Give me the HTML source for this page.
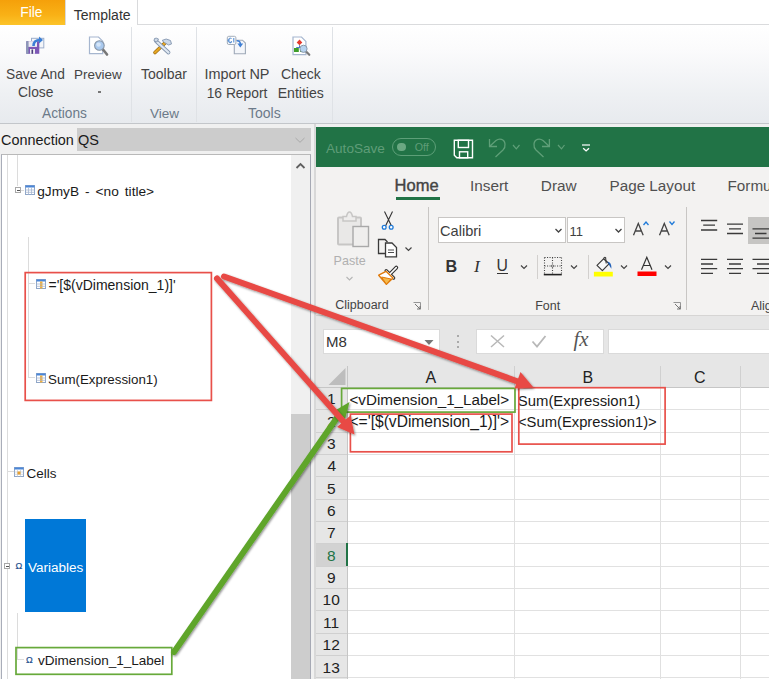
<!DOCTYPE html>
<html><head><meta charset="utf-8">
<style>
*{margin:0;padding:0;box-sizing:border-box}
html,body{width:769px;height:679px;overflow:hidden;background:#fff;font-family:"Liberation Sans",sans-serif;position:relative}
.a{position:absolute}
.t{position:absolute;white-space:nowrap;line-height:1}
svg{position:absolute;overflow:visible}
</style></head><body>
<!-- ===== Top app ribbon ===== -->
<div class="a" style="left:0;top:0;width:769px;height:25px;background:#fff"></div>
<div class="a" style="left:0;top:24px;width:769px;height:1px;background:#dadbdd"></div>
<div class="a" style="left:0;top:0;width:65px;height:25px;background:linear-gradient(#f5a00a,#f9b116 60%,#fcc42a)"></div>
<div class="a" style="left:65px;top:0;width:73px;height:25px;background:#fff;border-left:1px solid #d9dadc;border-right:1px solid #d9dadc"></div>
<div class="a" style="left:0;top:25px;width:769px;height:99px;background:linear-gradient(#ffffff,#fbfbfc 25%,#eef0f3 70%,#e7eaee)"></div>
<div class="a" style="left:0;top:123px;width:769px;height:1px;background:#c3c6ca"></div>
<div class="a" style="left:131px;top:27px;width:1px;height:95px;background:#dfe2e6"></div>
<div class="a" style="left:196px;top:27px;width:1px;height:95px;background:#dfe2e6"></div>
<div class="a" style="left:332px;top:27px;width:1px;height:95px;background:#dfe2e6"></div>
<div class="a" style="left:98px;top:91px;width:3px;height:2px;background:#777"></div>

<!-- save and close icon -->
<svg style="left:22px;top:32px" width="30" height="26" viewBox="0 0 30 26">
 <rect x="9.5" y="6.3" width="12.3" height="9.6" fill="#f3f5f9" stroke="#9daecb" stroke-width="1"/>
 <rect x="4.3" y="9.2" width="13" height="12.6" fill="#7d58b6"/>
 <rect x="4.3" y="9.2" width="2.2" height="12.6" fill="#8b9bb5"/>
 <rect x="6.5" y="9.2" width="8.5" height="5.7" fill="#eceef2"/>
 <rect x="8" y="17" width="5" height="4.8" fill="#f0f0f4"/>
 <rect x="9.5" y="17.5" width="1.6" height="4.3" fill="#4a3a7a"/>
 <path d="M11.5 14 C11.5 9.5 14 8 18.5 8" fill="none" stroke="#3b7fd6" stroke-width="2.6"/>
 <path d="M17 4.5 L21 8 L17 11.5 Z" fill="#3b7fd6"/>
</svg>
<!-- preview icon -->
<svg style="left:84px;top:32px" width="30" height="26" viewBox="0 0 30 26">
 <path d="M5.5 5 H14.5 L18.7 9.2 V21.7 H5.5 Z" fill="#fff" stroke="#a6b6cf" stroke-width="1.2"/>
 <path d="M19 17.5 L23 22.5" stroke="#777" stroke-width="2.6" stroke-linecap="round"/>
 <circle cx="15.4" cy="13.5" r="4.8" fill="#a9c9ee" stroke="#8795a6" stroke-width="1.1"/>
 <circle cx="14.6" cy="12.6" r="2.2" fill="#d4e5f8"/>
</svg>
<!-- toolbar icon -->
<svg style="left:148px;top:32px" width="30" height="26" viewBox="0 0 30 26">
 <path d="M7 20.5 L17.5 10.5" stroke="#9a6a10" stroke-width="3.6" stroke-linecap="round"/>
 <path d="M7 20.5 L17.5 10.5" stroke="#e5a624" stroke-width="2.4" stroke-linecap="round"/>
 <path d="M14 8.5 Q18 5.5 22.5 8.5 L23.5 12 L20.5 13 L16.5 10.5 Z" fill="#cdd8e6" stroke="#8496b0" stroke-width="0.9"/>
 <path d="M8 9 L20.5 20.5" stroke="#8294ad" stroke-width="3.8" stroke-linecap="round"/>
 <path d="M8 9 L20.5 20.5" stroke="#dfe8f2" stroke-width="2.2" stroke-linecap="round"/>
 <path d="M6.5 6.5 Q8 5.5 10.5 7 L9 10 L6 9 Z" fill="#cdd8e6" stroke="#8496b0" stroke-width="0.9"/>
</svg>
<!-- import NP icon -->
<svg style="left:222px;top:32px" width="30" height="26" viewBox="0 0 30 26">
 <path d="M12.3 8.2 H20.5 L23.4 11.1 V21.7 H12.3 Z" fill="#f4f6fa" stroke="#9ea9b8" stroke-width="1.1"/>
 <rect x="5.3" y="4.3" width="8.6" height="8.2" rx="1.5" fill="#fbfcfd" stroke="#a3adba" stroke-width="1"/>
 <path d="M9.5 6.5 A2.3 2.3 0 1 0 9.5 10.5 M11.8 6 V10.5 M8 10.6 L10 9.4" fill="none" stroke="#4a86d0" stroke-width="1"/>
 <path d="M6.3 8.5 L8 7.5 M6.3 8.5 L8 9.5" fill="none" stroke="#4a86d0" stroke-width="0.8"/>
 <path d="M14.8 8.8 Q18.3 8.6 18.3 12" fill="none" stroke="#3f7fd4" stroke-width="1.6"/>
 <path d="M15.4 11.6 L18.3 15.6 L21.2 11.6 Z" fill="#3f7fd4"/>
</svg>
<!-- check entities icon -->
<svg style="left:286px;top:32px" width="30" height="26" viewBox="0 0 30 26">
 <path d="M7 5 H15.5 L19.9 9.4 V22.6 H7 Z" fill="#fff" stroke="#a6b6cf" stroke-width="1.2"/>
 <path d="M13.5 7.6 L16.3 10.4 L13.5 13.2 L10.7 10.4 Z" fill="#e53a2e"/>
 <path d="M13.5 13.2 V15.5 M10.5 16 V15.5 H14" fill="none" stroke="#3a6ec0" stroke-width="0.9"/>
 <rect x="8" y="16" width="4.8" height="4" fill="#3e9e2a"/>
 <rect x="14" y="17" width="3" height="3" fill="#3e9e2a"/>
 <path d="M19.5 19 L23.3 22.8" stroke="#7a7a7a" stroke-width="2.2" stroke-linecap="round"/>
 <circle cx="17.5" cy="16.8" r="3.6" fill="#b6d3f0" stroke="#8a98a8" stroke-width="1"/>
</svg>

<!-- ===== Left panel ===== -->
<div class="a" style="left:0;top:124px;width:316px;height:555px;background:#f0f0f0"></div>
<div class="a" style="left:316px;top:124px;width:453px;height:3px;background:#f0f0f0"></div>
<div class="a" style="left:77px;top:128px;width:234px;height:23px;background:#cccccc"></div>
<svg style="left:294px;top:136px" width="12" height="8" viewBox="0 0 12 8"><path d="M1.5 2 L6 6.3 L10.5 2" fill="none" stroke="#a9a9a9" stroke-width="1"/></svg>
<div class="a" style="left:1px;top:154px;width:310px;height:525px;background:#fff;border-left:1px solid #a9adb9;border-top:1px solid #b9b9b9;border-right:1px solid #a6a9b4"></div>
<div class="a" style="left:291px;top:155px;width:19px;height:524px;background:#f0f0f0"></div>
<div class="a" style="left:291px;top:414px;width:19px;height:265px;background:#cdcdcd"></div>
<svg style="left:294px;top:161px" width="13" height="10" viewBox="0 0 13 10"><path d="M2.5 7 L6.5 3 L10.5 7" fill="none" stroke="#606060" stroke-width="1.8"/></svg>
<div class="a" style="left:314px;top:124px;width:2px;height:555px;background:#d8d8d8"></div>

<!-- tree guide lines -->
<div class="a" style="left:7px;top:155px;width:0;height:524px;border-left:1px solid #dcdcdc"></div>
<div class="a" style="left:17px;top:155px;width:0;height:31px;border-left:1px solid #dcdcdc"></div>
<div class="a" style="left:15px;top:187px;width:6px;height:6px;border:1px solid #a8a8a8;background:#fff"></div>
<div class="a" style="left:16.5px;top:189.5px;width:3px;height:1px;background:#555"></div>
<div class="a" style="left:21px;top:190px;width:3px;height:0;border-top:1px solid #dcdcdc"></div>
<div class="a" style="left:28px;top:237px;width:0;height:141px;border-left:1px solid #dcdcdc"></div>
<div class="a" style="left:28px;top:283px;width:7px;height:0;border-top:1px solid #dcdcdc"></div>
<div class="a" style="left:28px;top:377px;width:7px;height:0;border-top:1px solid #dcdcdc"></div>
<div class="a" style="left:7px;top:471px;width:7px;height:0;border-top:1px solid #dcdcdc"></div>
<div class="a" style="left:4px;top:563px;width:6px;height:6px;border:1px solid #a8a8a8;background:#fff"></div>
<div class="a" style="left:5.5px;top:565.5px;width:3px;height:1px;background:#555"></div>
<div class="a" style="left:17px;top:613px;width:0;height:47px;border-left:1px solid #dcdcdc"></div>
<div class="a" style="left:17px;top:659px;width:7px;height:0;border-top:1px solid #dcdcdc"></div>

<!-- tree icons -->
<svg style="left:25px;top:185px" width="10" height="10" viewBox="0 0 10 10">
 <rect x="0.5" y="0.5" width="9" height="9" fill="#fff" stroke="#8fa6c8"/><rect x="0.5" y="0.5" width="9" height="2" fill="#4a86d8"/>
 <path d="M0.5 5 H9.5 M0.5 7.3 H9.5 M3.5 2.5 V9.5 M6.5 2.5 V9.5" stroke="#a8b8d0" stroke-width="0.8"/>
</svg>
<svg style="left:36px;top:279px" width="10" height="10" viewBox="0 0 10 10">
 <rect x="0.5" y="0.5" width="9" height="9" fill="#fff" stroke="#8fa6c8"/><rect x="0.5" y="0.5" width="9" height="2" fill="#4a86d8"/>
 <rect x="4" y="2.5" width="2.5" height="7" fill="#f0b040"/>
 <path d="M0.5 5 H9.5 M0.5 7.3 H9.5" stroke="#a8b8d0" stroke-width="0.8"/>
</svg>
<svg style="left:36px;top:373px" width="10" height="10" viewBox="0 0 10 10">
 <rect x="0.5" y="0.5" width="9" height="9" fill="#fff" stroke="#8fa6c8"/><rect x="0.5" y="0.5" width="9" height="2" fill="#4a86d8"/>
 <rect x="4" y="2.5" width="2.5" height="7" fill="#f0b040"/>
 <path d="M0.5 5 H9.5 M0.5 7.3 H9.5" stroke="#a8b8d0" stroke-width="0.8"/>
</svg>
<svg style="left:14px;top:467px" width="10" height="10" viewBox="0 0 10 10">
 <rect x="0.5" y="0.5" width="9" height="9" fill="#fff" stroke="#8fa6c8"/><rect x="0.5" y="0.5" width="9" height="2" fill="#4a86d8"/>
 <path d="M0.5 5 H9.5 M0.5 7.3 H9.5 M3.5 2.5 V9.5 M6.5 2.5 V9.5" stroke="#c0cad8" stroke-width="0.7"/>
 <rect x="3.5" y="4.5" width="3" height="3" fill="#e8a030"/>
</svg>


<div class="a" style="left:25px;top:519px;width:61px;height:93px;background:#0078d7"></div>

<!-- annotation boxes on tree -->



<!-- ===== Excel ===== -->
<div class="a" style="left:316px;top:127px;width:453px;height:40px;background:#217346"></div>
<div class="a" style="left:316px;top:167px;width:453px;height:148px;background:#f3f2f1"></div>
<div class="a" style="left:316px;top:315px;width:453px;height:1px;background:#d6d5d4"></div>
<div class="a" style="left:316px;top:316px;width:453px;height:363px;background:#e6e6e6"></div>

<!-- autosave toggle -->
<div class="a" style="left:392px;top:137.5px;width:44px;height:18px;border:1px solid #5d9f78;border-radius:9px"></div>
<div class="a" style="left:397px;top:142.5px;width:8.6px;height:8.6px;border-radius:50%;background:#6aa882"></div>
<!-- QAT icons -->
<svg style="left:450px;top:136px" width="26" height="26" viewBox="0 0 26 26">
 <path d="M4.3 4.3 H22.5 V21.8 H6.8 L4.3 19.3 Z" fill="none" stroke="#fff" stroke-width="1.4"/>
 <rect x="8.3" y="4.3" width="10.2" height="7.2" fill="none" stroke="#fff" stroke-width="1.4"/>
 <rect x="9.5" y="15.8" width="8.2" height="6" fill="none" stroke="#fff" stroke-width="1.4"/>
</svg>
<svg style="left:486px;top:136px" width="40" height="26" viewBox="0 0 40 26">
 <path d="M3.5 3 V10.5 H11 M3.5 10.5 L10 4.6 C13 2 18.5 2.5 19 8 C19.3 10.5 18.5 12.5 17 14 L9.5 21" fill="none" stroke="#5f9f78" stroke-width="1.3"/>
 <path d="M27 9 L30.3 12.8 L33.5 9" fill="none" stroke="#5f9f78" stroke-width="1.2"/>
</svg>
<svg style="left:530px;top:136px" width="40" height="26" viewBox="0 0 40 26">
 <path d="M19.4 3 V10.5 H12 M19.4 10.5 L13 4.6 C10 2 4.5 2.5 4 8 C3.7 10.5 4.5 12.5 6 14 L13.5 21" fill="none" stroke="#5f9f78" stroke-width="1.3"/>
 <path d="M28 9 L31.5 12.8 L34.5 9" fill="none" stroke="#5f9f78" stroke-width="1.2"/>
</svg>
<svg style="left:578px;top:140px" width="16" height="14" viewBox="0 0 16 14">
 <path d="M4 5 H12" stroke="#fff" stroke-width="1.2"/>
 <path d="M5.2 8.2 L8.1 10.9 L11 8.2" fill="none" stroke="#fff" stroke-width="1.4"/>
</svg>

<!-- tab underline -->
<div class="a" style="left:395.5px;top:196.5px;width:44px;height:3px;background:#217346"></div>

<!-- ribbon separators -->
<div class="a" style="left:428px;top:207px;width:1px;height:103px;background:#c8c6c4"></div>
<div class="a" style="left:686px;top:207px;width:1px;height:103px;background:#c8c6c4"></div>
<div class="a" style="left:536.5px;top:255px;width:1px;height:24px;background:#d2d0ce"></div>
<div class="a" style="left:587.5px;top:255px;width:1px;height:24px;background:#d2d0ce"></div>

<!-- clipboard group -->
<svg style="left:330px;top:205px" width="90" height="85" viewBox="0 0 90 85">
 <rect x="8" y="12.5" width="23" height="27" rx="1" fill="#e9e8e7" stroke="#c7c6c5" stroke-width="2"/>
 <path d="M13 16 V11.5 H16.5 Q17.5 7 19.5 7 Q21.5 7 22.5 11.5 H26 V16 Z" fill="#eeedec" stroke="#c7c6c5" stroke-width="1.5"/>
 <rect x="23" y="21.5" width="15.5" height="20" fill="#efeeed" stroke="#a9a9a9" stroke-width="1.4"/>
 <path d="M16.5 72 L19.5 75 L22.5 72" fill="none" stroke="#b5b5b5" stroke-width="1.1"/>
 <path d="M54.5 6.5 L61.5 21 M62.5 6.5 L55.5 21" stroke="#333" stroke-width="1.1"/>
 <circle cx="54.2" cy="22.3" r="1.9" fill="#fff" stroke="#1f7ad8" stroke-width="1.3"/>
 <circle cx="61.2" cy="22.3" r="1.9" fill="#fff" stroke="#1f7ad8" stroke-width="1.3"/>
 <path d="M56 48.5 H48.5 V34.5 H55 L57.5 37" fill="none" stroke="#3a3a3a" stroke-width="1.3"/>
 <path d="M55.5 38 H62 L66.5 42.5 V51.8 H55.5 Z" fill="#fff" stroke="#3a3a3a" stroke-width="1.3"/>
 <path d="M58 45 H64 M58 47.5 H64" stroke="#3a3a3a" stroke-width="0.9"/>
 <path d="M75.5 42.5 L78.5 45.5 L81.5 42.5" fill="none" stroke="#444" stroke-width="1.2"/>
 <path d="M56.2 65.8 L63.6 73" stroke="#333" stroke-width="3.4" stroke-linecap="round"/>
 <path d="M60 69 L66.3 62.6" stroke="#333" stroke-width="3.8" stroke-linecap="round"/>
 <path d="M56.2 65.8 L63.6 73" stroke="#fff" stroke-width="1.2" stroke-linecap="round"/>
 <path d="M60 69 L66.3 62.6" stroke="#fff" stroke-width="1.5" stroke-linecap="round"/>
 <path d="M48.7 70.2 L56 66.3 L63 73.1 L56.4 79.3 Z" fill="#fff" stroke="#e07a0a" stroke-width="1.4" stroke-linejoin="round"/>
 <path d="M51.5 72 L61 74 L56.4 79.3 Z" fill="#f6b94a" stroke="#e07a0a" stroke-width="1"/>
</svg>
<svg style="left:412px;top:301px" width="10" height="10" viewBox="0 0 10 10"><path d="M1.5 1.5 H8.5 V8.5" fill="none" stroke="#8a8a8a" stroke-width="0.9"/><path d="M3 3 L8 8 M5 8 H8 V5" fill="none" stroke="#666" stroke-width="0.9"/></svg>
<svg style="left:672px;top:301px" width="10" height="10" viewBox="0 0 10 10"><path d="M1.5 1.5 H8.5 V8.5" fill="none" stroke="#8a8a8a" stroke-width="0.9"/><path d="M3 3 L8 8 M5 8 H8 V5" fill="none" stroke="#666" stroke-width="0.9"/></svg>

<!-- font group -->
<div class="a" style="left:438px;top:217px;width:128px;height:26px;background:#fff;border:1px solid #c8c6c4"></div>
<div class="a" style="left:567px;top:217px;width:58px;height:26px;background:#fff;border:1px solid #c8c6c4"></div>
<svg style="left:552px;top:226px" width="12" height="10" viewBox="0 0 12 10"><path d="M3.5 3 L6.5 6 L9.5 3" fill="none" stroke="#444" stroke-width="1.3"/></svg>
<svg style="left:612px;top:226px" width="12" height="10" viewBox="0 0 12 10"><path d="M3.5 3 L6.5 6 L9.5 3" fill="none" stroke="#444" stroke-width="1.3"/></svg>
<svg style="left:628px;top:215px" width="50" height="24" viewBox="0 0 50 24">
 <path d="M5.5 20.3 L10.3 8.5 L15.2 20.3 M7.3 16 H13.3" fill="none" stroke="#444" stroke-width="1.3"/>
 <path d="M15.5 10 L18 7 L20.5 10" fill="none" stroke="#1f7ad8" stroke-width="1.3"/>
 <path d="M31.5 20.3 L36.3 8.5 L41.2 20.3 M33.3 16 H39.3" fill="none" stroke="#444" stroke-width="1.3"/>
 <path d="M41.5 6.5 L44 9.5 L46.5 6.5" fill="none" stroke="#1f7ad8" stroke-width="1.3"/>
</svg>
<svg style="left:518px;top:262px" width="12" height="10" viewBox="0 0 12 10"><path d="M3 3.5 L6 6.5 L9 3.5" fill="none" stroke="#444" stroke-width="1.2"/></svg>
<svg style="left:568px;top:262px" width="12" height="10" viewBox="0 0 12 10"><path d="M3 3.5 L6 6.5 L9 3.5" fill="none" stroke="#444" stroke-width="1.2"/></svg>
<svg style="left:618px;top:262px" width="12" height="10" viewBox="0 0 12 10"><path d="M3 3.5 L6 6.5 L9 3.5" fill="none" stroke="#444" stroke-width="1.2"/></svg>
<svg style="left:662px;top:262px" width="12" height="10" viewBox="0 0 12 10"><path d="M3 3.5 L6 6.5 L9 3.5" fill="none" stroke="#444" stroke-width="1.2"/></svg>
<div class="a" style="left:496.8px;top:273px;width:11px;height:1.2px;background:#333"></div>
<svg style="left:543px;top:257px" width="20" height="19" viewBox="0 0 20 19">
 <path d="M1.5 0.5 H18.5 M1.5 0.5 V17 M18.5 0.5 V17 M1.5 9 H18.5 M9.5 0.5 V17" fill="none" stroke="#444" stroke-width="1.1" stroke-dasharray="1.1 1.4"/>
 <circle cx="9.5" cy="9" r="1.1" fill="#fff" stroke="#444" stroke-width="0.8"/>
 <path d="M0.8 17.6 H18.8" stroke="#222" stroke-width="1.6"/>
</svg>
<svg style="left:592px;top:255px" width="24" height="22" viewBox="0 0 24 22">
 <path d="M5 10.3 L11.5 3.8 L17.2 8.7 L10.4 15.7 Z" fill="#f8f8f8" stroke="#3a3a3a" stroke-width="1.2" stroke-linejoin="round"/>
 <path d="M11.5 3.8 Q12.5 1.6 13.6 2.6 L14.2 8.5" fill="none" stroke="#3a3a3a" stroke-width="1.1"/>
 <path d="M15.4 6.6 Q19.6 7.2 19.4 13.8 Q17.6 11.5 15.4 6.6 Z" fill="#1f5fb8"/>
 <rect x="1.9" y="16.8" width="18.9" height="4.7" fill="#ffff00"/>
</svg>
<svg style="left:636px;top:255px" width="22" height="22" viewBox="0 0 22 22">
 <path d="M5.5 14.8 L10.8 2.2 L16 14.8 M7.5 10.5 H14" fill="none" stroke="#333" stroke-width="1.2"/>
 <rect x="1.5" y="16.5" width="19" height="4.5" fill="#ff0000"/>
</svg>

<!-- alignment group -->
<div class="a" style="left:748px;top:216.5px;width:21px;height:27px;background:#c6c5c3"></div>
<svg style="left:698px;top:215px" width="71" height="65" viewBox="0 0 71 65"><path d="M3.0 5.5 H19.2 M5.2 10.2 H17.0 M3.0 15.0 H19.2 M29.0 9.2 H45.0 M31.0 13.8 H43.0 M29.0 18.5 H45.0 M54.5 13.8 H73.0 M57.0 18.5 H68.5 M54.5 23.2 H73.0 M3.0 44.3 H19.2 M3.0 49.0 H15.0 M3.0 53.7 H19.2 M3.0 58.4 H15.0 M29.0 44.3 H45.0 M31.0 49.0 H43.0 M29.0 53.7 H45.0 M31.0 58.4 H43.0 M54.5 44.3 H73.0 M59.0 49.0 H73.0 M54.5 53.7 H73.0 M59.0 58.4 H73.0" stroke="#3a3a3a" stroke-width="1.3" fill="none"/></svg>

<!-- formula bar -->

<div class="a" style="left:323px;top:328.5px;width:117px;height:25px;background:#fff;border:1px solid #dadada"></div>
<svg style="left:423px;top:338px" width="12" height="8" viewBox="0 0 12 8"><path d="M1.5 2 H10.5 L6 7 Z" fill="#777"/></svg>
<div class="a" style="left:457px;top:335px;width:2px;height:2px;background:#aaa"></div>
<div class="a" style="left:457px;top:340.5px;width:2px;height:2px;background:#aaa"></div>
<div class="a" style="left:457px;top:346px;width:2px;height:2px;background:#aaa"></div>
<div class="a" style="left:475.5px;top:328.5px;width:128px;height:25px;background:#fff;border:1px solid #dadada"></div>
<svg style="left:488px;top:333px" width="60" height="17" viewBox="0 0 60 17">
 <path d="M3 2.5 L16 14 M16 2.5 L3 14" stroke="#b8b8b8" stroke-width="1.5"/>
 <path d="M44.5 8.5 L49 13.5 L57.5 3" fill="none" stroke="#b8b8b8" stroke-width="1.8"/>
</svg>

<div class="a" style="left:607.5px;top:328.5px;width:162px;height:25px;background:#fff;border:1px solid #dadada;border-right:none"></div>

<!-- grid -->
<div class="a" style="left:348px;top:387px;width:421px;height:292px;background:#fff"></div>
<svg style="left:326px;top:366px" width="22" height="21" viewBox="0 0 22 21"><path d="M19.5 2 V19 H2.5 Z" fill="#bdbdbd"/></svg>
<div class="a" style="left:316px;top:387px;width:453px;height:1px;background:#c6c6c6"></div>
<div class="a" style="left:347px;top:366px;width:1px;height:313px;background:#c6c6c6"></div>
<div class="a" style="left:514px;top:366px;width:1px;height:21px;background:#d0d0d0"></div>
<div class="a" style="left:660px;top:366px;width:1px;height:21px;background:#d0d0d0"></div>
<div class="a" style="left:740px;top:366px;width:1px;height:21px;background:#d0d0d0"></div>
<div class="a" style="left:514px;top:387px;width:1px;height:292px;background:#e0e0e0"></div>
<div class="a" style="left:660px;top:387px;width:1px;height:292px;background:#e0e0e0"></div>
<div class="a" style="left:740px;top:387px;width:1px;height:292px;background:#e0e0e0"></div>
<div class="a" style="left:316px;top:409px;width:31px;height:1px;background:#d0d0d0"></div>
<div class="a" style="left:348px;top:409px;width:421px;height:1px;background:#e1e1e1"></div>
<div class="a" style="left:316px;top:432px;width:31px;height:1px;background:#d0d0d0"></div>
<div class="a" style="left:348px;top:432px;width:421px;height:1px;background:#e1e1e1"></div>
<div class="a" style="left:316px;top:454px;width:31px;height:1px;background:#d0d0d0"></div>
<div class="a" style="left:348px;top:454px;width:421px;height:1px;background:#e1e1e1"></div>
<div class="a" style="left:316px;top:476px;width:31px;height:1px;background:#d0d0d0"></div>
<div class="a" style="left:348px;top:476px;width:421px;height:1px;background:#e1e1e1"></div>
<div class="a" style="left:316px;top:499px;width:31px;height:1px;background:#d0d0d0"></div>
<div class="a" style="left:348px;top:499px;width:421px;height:1px;background:#e1e1e1"></div>
<div class="a" style="left:316px;top:521px;width:31px;height:1px;background:#d0d0d0"></div>
<div class="a" style="left:348px;top:521px;width:421px;height:1px;background:#e1e1e1"></div>
<div class="a" style="left:316px;top:543px;width:31px;height:1px;background:#d0d0d0"></div>
<div class="a" style="left:348px;top:543px;width:421px;height:1px;background:#e1e1e1"></div>
<div class="a" style="left:316px;top:566px;width:31px;height:1px;background:#d0d0d0"></div>
<div class="a" style="left:348px;top:566px;width:421px;height:1px;background:#e1e1e1"></div>
<div class="a" style="left:316px;top:588px;width:31px;height:1px;background:#d0d0d0"></div>
<div class="a" style="left:348px;top:588px;width:421px;height:1px;background:#e1e1e1"></div>
<div class="a" style="left:316px;top:610px;width:31px;height:1px;background:#d0d0d0"></div>
<div class="a" style="left:348px;top:610px;width:421px;height:1px;background:#e1e1e1"></div>
<div class="a" style="left:316px;top:633px;width:31px;height:1px;background:#d0d0d0"></div>
<div class="a" style="left:348px;top:633px;width:421px;height:1px;background:#e1e1e1"></div>
<div class="a" style="left:316px;top:655px;width:31px;height:1px;background:#d0d0d0"></div>
<div class="a" style="left:348px;top:655px;width:421px;height:1px;background:#e1e1e1"></div>
<div class="a" style="left:316px;top:677px;width:31px;height:1px;background:#d0d0d0"></div>
<div class="a" style="left:348px;top:677px;width:421px;height:1px;background:#e1e1e1"></div>
<div class="a" style="left:316px;top:544px;width:30px;height:22px;background:#d2d2d2"></div>
<div class="a" style="left:346px;top:543px;width:2px;height:23px;background:#217346"></div>
<div class="t" style="left:20.3px;top:5.6px;font-size:13.8px;color:#fff;font-weight:400;">File</div>
<div class="t" style="left:73.7px;top:7.5px;font-size:14.04px;color:#333;font-weight:400;">Template</div>
<div class="t" style="left:6.0px;top:67.7px;font-size:13.76px;color:#444;font-weight:400;">Save And</div>
<div class="t" style="left:18.1px;top:86.3px;font-size:13.84px;color:#444;font-weight:400;">Close</div>
<div class="t" style="left:74.0px;top:67.7px;font-size:13.43px;color:#444;font-weight:400;">Preview</div>
<div class="t" style="left:42.0px;top:106.5px;font-size:13.71px;color:#6c7a89;font-weight:400;">Actions</div>
<div class="t" style="left:141.0px;top:67.0px;font-size:14px;color:#444;font-weight:400;">Toolbar</div>
<div class="t" style="left:150.0px;top:106.5px;font-size:13.53px;color:#6c7a89;font-weight:400;">View</div>
<div class="t" style="left:204.5px;top:67.0px;font-size:14.45px;color:#444;font-weight:400;">Import NP</div>
<div class="t" style="left:206.7px;top:86.5px;font-size:13.82px;color:#444;font-weight:400;">16 Report</div>
<div class="t" style="left:281.0px;top:67.0px;font-size:14.02px;color:#444;font-weight:400;">Check</div>
<div class="t" style="left:277.7px;top:85.5px;font-size:14.07px;color:#444;font-weight:400;">Entities</div>
<div class="t" style="left:248.0px;top:105.5px;font-size:14px;color:#6c7a89;font-weight:400;">Tools</div>
<div class="t" style="left:1.0px;top:132.6px;font-size:14.41px;color:#1a1a1a;font-weight:400;">Connection</div>
<div class="t" style="left:78.0px;top:132.6px;font-size:14.5px;color:#1a1a1a;font-weight:400;">QS</div>
<div class="t" style="left:37.2px;top:184.5px;font-size:13.7px;color:#1a1a1a;font-weight:400;word-spacing:2.2px">gJmyB - &lt;no title&gt;</div>
<div class="t" style="left:48.5px;top:278.0px;font-size:14px;color:#1a1a1a;font-weight:400;">='[$(vDimension_1)]'</div>
<div class="t" style="left:48.1px;top:372.8px;font-size:13.33px;color:#1a1a1a;font-weight:400;">Sum(Expression1)</div>
<div class="t" style="left:26.6px;top:466.6px;font-size:13.46px;color:#1a1a1a;font-weight:400;">Cells</div>
<div class="t" style="left:28.0px;top:560.6px;font-size:13.49px;color:#fff;font-weight:400;">Variables</div>
<div class="t" style="left:38.0px;top:654.0px;font-size:13.54px;color:#1a1a1a;font-weight:400;">vDimension_1_Label</div>
<div class="t" style="left:326.0px;top:141.9px;font-size:13.58px;color:#5f9d78;font-weight:400;">AutoSave</div>
<div class="t" style="left:414.7px;top:142.1px;font-size:10.72px;color:#5f9d78;font-weight:400;">Off</div>
<div class="t" style="left:394.6px;top:177.0px;font-size:16.5px;color:#444;font-weight:400;-webkit-text-stroke:0.4px #444">Home</div>
<div class="t" style="left:470.0px;top:178.0px;font-size:15.35px;color:#505050;font-weight:400;">Insert</div>
<div class="t" style="left:540.8px;top:178.0px;font-size:15.36px;color:#505050;font-weight:400;">Draw</div>
<div class="t" style="left:609.5px;top:178.0px;font-size:15.26px;color:#505050;font-weight:400;">Page Layout</div>
<div class="t" style="left:727.5px;top:178.0px;font-size:15.26px;color:#505050;font-weight:400;">Formulas</div>
<div class="t" style="left:440.0px;top:224.0px;font-size:14.6px;color:#404040;font-weight:400;">Calibri</div>
<div class="t" style="left:569.5px;top:226.0px;font-size:12.96px;color:#404040;font-weight:400;">11</div>
<div class="t" style="left:333.6px;top:254.5px;font-size:12.55px;color:#b0b0b0;font-weight:400;">Paste</div>
<div class="t" style="left:335.3px;top:299.0px;font-size:12.48px;color:#444;font-weight:400;">Clipboard</div>
<div class="t" style="left:535.2px;top:299.5px;font-size:12.48px;color:#444;font-weight:400;">Font</div>
<div class="t" style="left:751.0px;top:299.5px;font-size:12.48px;color:#444;font-weight:400;">Alignment</div>
<div class="t" style="left:445.4px;top:257.5px;font-size:16.2px;color:#333;font-weight:700;">B</div>
<div class="t" style="left:473.9px;top:257.5px;font-size:17.5px;color:#333;font-weight:400;font-family:'Liberation Serif';font-style:italic">I</div>
<div class="t" style="left:496.6px;top:258.2px;font-size:15.8px;color:#333;font-weight:400;">U</div>
<div class="t" style="left:573.5px;top:329.4px;font-size:20.93px;color:#555;font-weight:400;font-family:'Liberation Serif';font-style:italic">fx</div>
<div class="t" style="left:15.5px;top:562.0px;font-size:9.11px;color:#24508e;font-weight:400;-webkit-text-stroke:0.2px #24508e">Ω</div>
<div class="t" style="left:26.0px;top:656.0px;font-size:9px;color:#24508e;font-weight:400;-webkit-text-stroke:0.2px #24508e">Ω</div>
<div class="t" style="left:326.0px;top:333.7px;font-size:15.0px;color:#333;font-weight:400;">M8</div>
<div class="t" style="left:425.5px;top:370.0px;font-size:16.0px;color:#222;font-weight:400;">A</div>
<div class="t" style="left:582.5px;top:370.0px;font-size:16.0px;color:#222;font-weight:400;">B</div>
<div class="t" style="left:694.0px;top:370.0px;font-size:16.0px;color:#222;font-weight:400;">C</div>
<div class="t" style="left:349.5px;top:392.3px;font-size:15.19px;color:#1a1a1a;font-weight:400;">&lt;vDimension_1_Label&gt;</div>
<div class="t" style="left:349.5px;top:413.5px;font-size:15.59px;color:#1a1a1a;font-weight:400;">&lt;='[$(vDimension_1)]'&gt;</div>
<div class="t" style="left:517.8px;top:393.8px;font-size:14.88px;color:#1a1a1a;font-weight:400;">Sum(Expression1)</div>
<div class="t" style="left:518.0px;top:415.3px;font-size:14.77px;color:#1a1a1a;font-weight:400;">&lt;Sum(Expression1)&gt;</div>
<div class="t" style="left:327.1px;top:391.3px;font-size:15.5px;color:#222;font-weight:400;">1</div>
<div class="t" style="left:327.1px;top:413.6px;font-size:15.5px;color:#222;font-weight:400;">2</div>
<div class="t" style="left:327.1px;top:436.0px;font-size:15.5px;color:#222;font-weight:400;">3</div>
<div class="t" style="left:327.6px;top:458.3px;font-size:15.5px;color:#222;font-weight:400;">4</div>
<div class="t" style="left:327.1px;top:480.7px;font-size:15.5px;color:#222;font-weight:400;">5</div>
<div class="t" style="left:327.1px;top:503.0px;font-size:15.5px;color:#222;font-weight:400;">6</div>
<div class="t" style="left:327.1px;top:525.4px;font-size:15.5px;color:#222;font-weight:400;">7</div>
<div class="t" style="left:327.1px;top:547.7px;font-size:15.5px;color:#217346;font-weight:400;">8</div>
<div class="t" style="left:327.1px;top:570.1px;font-size:15.5px;color:#222;font-weight:400;">9</div>
<div class="t" style="left:322.6px;top:592.4px;font-size:15.5px;color:#222;font-weight:400;">10</div>
<div class="t" style="left:323.1px;top:614.8px;font-size:15.5px;color:#222;font-weight:400;">11</div>
<div class="t" style="left:322.6px;top:637.1px;font-size:15.5px;color:#222;font-weight:400;">12</div>
<div class="t" style="left:322.6px;top:659.5px;font-size:15.5px;color:#222;font-weight:400;">13</div>
<svg style="left:0;top:0" width="769" height="679" viewBox="0 0 769 679"><rect x="25.2" y="272.6" width="186.20000000000002" height="127.79999999999995" fill="none" stroke="#e8504a" stroke-width="1.7"/><rect x="16" y="647.6" width="155.8" height="26.699999999999932" fill="none" stroke="#67a93a" stroke-width="1.7"/><rect x="341.6" y="388.4" width="173.39999999999998" height="23.700000000000045" fill="none" stroke="#67a93a" stroke-width="1.7"/><rect x="350.4" y="414.1" width="161.60000000000002" height="37.69999999999999" fill="none" stroke="#e8504a" stroke-width="1.7"/><rect x="518.8" y="387.7" width="146.30000000000007" height="56.400000000000034" fill="none" stroke="#e8504a" stroke-width="1.7"/></svg>
<svg style="left:0;top:0" width="769" height="679" viewBox="0 0 769 679">
 <defs><filter id="sh" x="-10%" y="-10%" width="120%" height="120%"><feDropShadow dx="1" dy="1.2" stdDeviation="0.9" flood-color="#000" flood-opacity="0.45"/></filter></defs>
 <g filter="url(#sh)" fill="#5ea52b" stroke="#5ea52b">
  <path d="M174 652 L341 412" stroke-width="6" stroke-linecap="round" fill="none"/>
  <path d="M349.5 402 L336 410 L345 419 Z" stroke="none"/>
 </g>
 <g filter="url(#sh)" fill="#e84a44" stroke="#e84a44">
  <path d="M224 276.5 L522 383" stroke-width="6" stroke-linecap="round" fill="none"/>
  <path d="M533.5 387.5 L520.5 372 L514.5 388.5 Z" stroke="none"/>
  <path d="M217 278.5 L343 421" stroke-width="6" stroke-linecap="round" fill="none"/>
  <path d="M354.5 434.5 L337 427 L350.5 415.5 Z" stroke="none"/>
 </g>
</svg>

</body></html>
